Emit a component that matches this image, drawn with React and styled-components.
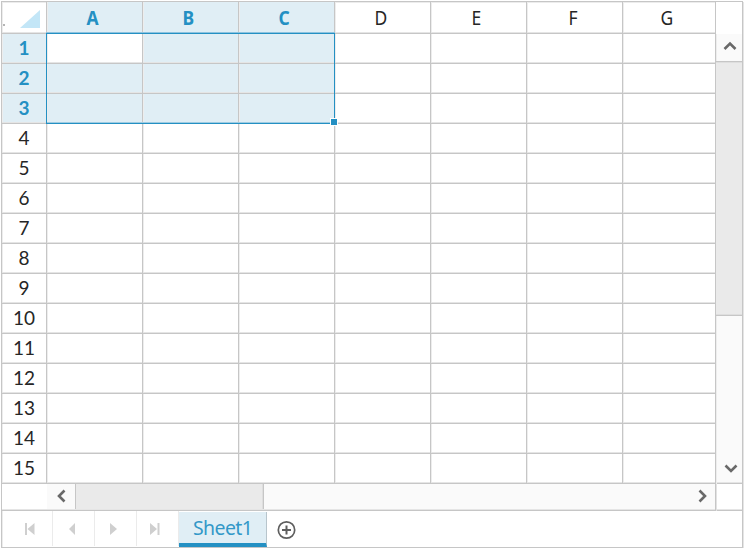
import React from "react";
import styled, { createGlobalStyle } from "styled-components";

const line = "#c6c6c6";
const soft = "#e5e5e5";
const blue = "#2490c3";
const pale = "#e0eef5";

const Global = createGlobalStyle`
  *, *::before, *::after { box-sizing: border-box; }
  body { margin: 0; background: #fff; overflow: hidden; }
`;

const Workbook = styled.div`
  width: 742px;
  height: 547px;
  margin: 1px 0 0 1px;
  border: 1px solid ${line};
  box-shadow: 1px 1px 0 ${soft}, inset 1px 1px 0 #ececec;
  display: grid;
  grid-template-columns: 714px 26px;
  grid-template-rows: 482px 27px 36px;
  font-family: Lato, "Open Sans", sans-serif;
`;

const Grid = styled.div`
  position: relative;
  display: grid;
  grid-template-columns: 45px repeat(6, 96px) 93px;
  grid-template-rows: 32px repeat(15, 30px);
`;

const Cell = styled.div`
  background: ${(p) => (p.$on ? pale : "transparent")};
  box-shadow: inset 0 -1px 0 ${line}, inset -1px 0 0 ${line},
    inset 0 -2px 0 ${soft}, inset 1px 0 0 #ededed;
`;

const Header = styled(Cell)`
  display: flex;
  align-items: center;
  justify-content: center;
  padding-right: ${(p) => (p.$col ? "5px" : "1px")};
  padding-bottom: ${(p) => (p.$col ? "0" : "3px")};
  color: ${(p) => (p.$on ? blue : "#262626")};
  font-family: ${(p) => (p.$col ? '"Noto Sans"' : "Lato")}, sans-serif;
  font-size: 19px;
  line-height: 24px;
  font-weight: ${(p) => (p.$on ? 700 : 400)};
`;

const Letter = styled.span`
  transform: scaleX(0.92);
`;

const Corner = styled(Cell)`
  svg { display: block; }
`;

const Selection = styled.div`
  position: absolute;
  left: 44px;
  top: 31px;
  width: 289px;
  height: 91px;
  border: 1px solid ${blue};
  box-shadow: 0 -1px 0 #8ec3df, inset 0 -1px 0 #a0cce2;
`;

const Handle = styled.i`
  position: absolute;
  right: -4px;
  bottom: -3px;
  width: 8px;
  height: 8px;
  background: ${blue};
  border: 1px solid #fff;
`;

const VScroll = styled.div`
  display: grid;
  grid-template-rows: 32px 27px 255px 1fr;
  background: #fafafa;
  box-shadow: inset 1px 0 0 #ededed, inset 0 -1px 0 ${line}, inset 0 -2px 0 ${soft};
`;

const Blank = styled.div`
  background: #fff;
`;

const VThumb = styled.div`
  background: #eaeaea;
  border-top: 1px solid ${line};
  border-bottom: 1px solid ${line};
  box-shadow: inset 0 1px 0 #dedede, inset 0 -1px 0 #dedede;
`;

const ScrollButton = styled.div`
  display: flex;
  align-items: ${(p) => p.$align || "center"};
  justify-content: center;
  padding: ${(p) => p.$pad || 0};
  svg { display: block; }
`;

const HScroll = styled.div`
  display: grid;
  grid-template-columns: 45px 28px 189px 1fr 26px;
  background: #fafafa;
  box-shadow: inset -1px 0 0 ${line}, inset 0 -1px 0 ${line}, inset 0 -2px 0 ${soft};
`;

const HBlank = styled.div`
  margin-bottom: 2px;
  background: #fff;
`;

const HThumb = styled.div`
  margin-bottom: 2px;
  background: #eaeaea;
  border-left: 1px solid ${line};
  border-right: 1px solid ${line};
  box-shadow: inset -1px 0 0 #dedede;
`;

const ScrollCorner = styled.div`
  box-shadow: inset 1px 0 0 #e2e2e2, inset 0 -1px 0 ${line}, inset 0 -2px 0 ${soft};
`;

const Tabs = styled.div`
  grid-column: 1 / -1;
  display: flex;
`;

const NavButton = styled.div`
  width: ${(p) => p.$w}px;
  height: 35px;
  padding-left: ${(p) => p.$pad}px;
  border-right: 1px solid #ebebeb;
  display: flex;
  align-items: center;
  svg { display: block; }
`;

const SheetTab = styled.div`
  width: 88px;
  height: 35px;
  margin-top: 1px;
  padding-left: 14px;
  background: ${pale};
  border-right: 1px solid #b8c5cc;
  border-bottom: 4px solid ${blue};
  color: #3298c8;
  font: 400 19.5px/32px "Noto Sans", sans-serif;
  letter-spacing: -0.6px;
  white-space: nowrap;
`;

const AddButton = styled.div`
  display: flex;
  margin: 9px 0 0 9px;
  height: 20px;
`;

const arrows = {
  up: "M1.5 8 7 2.5 12.5 8",
  down: "M1.5 2.5 7 8 12.5 2.5",
  left: "M9.5 1.5 4 7l5.5 5.5",
  right: "M4.5 1.5 10 7l-5.5 5.5",
};

const Chevron = ({ dir }) => {
  const vertical = dir === "up" || dir === "down";
  return (
    <svg width="14" height={vertical ? 10 : 14} fill="none" stroke="#696969" strokeWidth="2.6">
      <path d={arrows[dir]} />
    </svg>
  );
};

const NavIcon = ({ d }) => (
  <svg width="12" height="14" fill="#cfcfcf"><path d={d} /></svg>
);

const rows = Array.from({ length: 15 }, (_, i) => i + 1);
const cols = ["A", "B", "C", "D", "E", "F", "G"];

export default function App() {
  return (
    <>
      <Global />
      <Workbook>
        <Grid>
          <Corner>
            <svg width="45" height="30">
              <path d="M38 8v18H18z" fill="#c3e6f7" />
              <path d="M1 22h2v2H1z" fill="#b5b5b5" />
            </svg>
          </Corner>
          {cols.map((c, i) => (
            <Header key={c} $col $on={i < 3}><Letter>{c}</Letter></Header>
          ))}
          {rows.map((r) => (
            <React.Fragment key={r}>
              <Header $on={r < 4}>{r}</Header>
              {cols.map((c, i) => (
                <Cell key={c} $on={r < 4 && i < 3 && !(r === 1 && i === 0)} />
              ))}
            </React.Fragment>
          ))}
          <Selection><Handle /></Selection>
        </Grid>
        <VScroll>
          <Blank />
          <ScrollButton $pad="0 0 4px 2px"><Chevron dir="up" /></ScrollButton>
          <VThumb />
          <ScrollButton $align="flex-end" $pad="0 0 11px 3px"><Chevron dir="down" /></ScrollButton>
        </VScroll>
        <HScroll>
          <HBlank />
          <ScrollButton $pad="0 0 3px 1px"><Chevron dir="left" /></ScrollButton>
          <HThumb />
          <span />
          <ScrollButton $pad="0 2px 3px 0"><Chevron dir="right" /></ScrollButton>
        </HScroll>
        <ScrollCorner />
        <Tabs>
          <NavButton $w={51} $pad={22}><NavIcon d="M1 1h2v12H1zM10.5 1v12L3.5 7z" /></NavButton>
          <NavButton $w={42} $pad={14}><NavIcon d="M8 1v12L2 7z" /></NavButton>
          <NavButton $w={42} $pad={14}><NavIcon d="M1 1v12l7-6z" /></NavButton>
          <NavButton $w={42} $pad={12}><NavIcon d="M1 1v12l7-6zM8.5 1h2v12h-2z" /></NavButton>
          <SheetTab>Sheet1</SheetTab>
          <AddButton>
            <svg width="20" height="20" fill="none" stroke="#5e5e5e">
              <circle cx="10.5" cy="10" r="8.2" strokeWidth="1.7" />
              <path d="M10.5 5.5v9M6 10h9" strokeWidth="2" />
            </svg>
          </AddButton>
        </Tabs>
      </Workbook>
    </>
  );
}
